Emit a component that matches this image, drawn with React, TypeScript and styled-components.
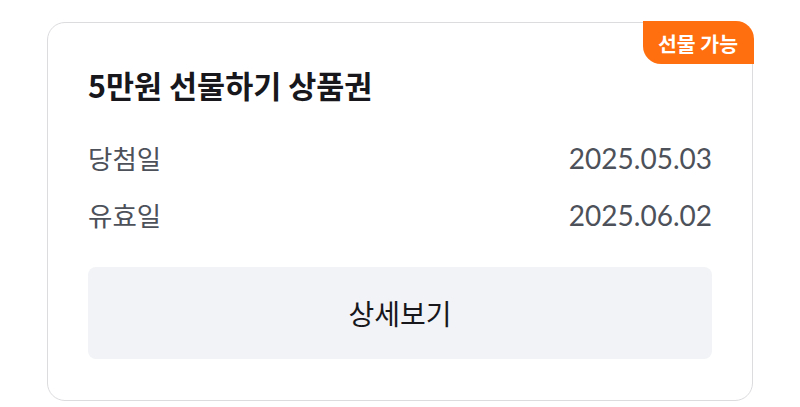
import styled, { createGlobalStyle } from "styled-components";

const GlobalStyle = createGlobalStyle`
  html, body {
    margin: 0;
    padding: 0;
    background: #fff;
  }
  body {
    font-family: "Noto Sans CJK KR", "Noto Sans", sans-serif;
  }
`;

const StyledPage = styled.div`
  width: 800px;
  height: 407px;
  padding: 22px 47px 0 47px;
  box-sizing: border-box;
`;

const StyledCard = styled.div`
  position: relative;
  box-sizing: border-box;
  width: 706px;
  height: 379px;
  border: 1px solid #dcdcdf;
  border-radius: 18px;
  padding: 40px 40px 0 40px;
  display: flex;
  flex-direction: column;
`;

const StyledBadge = styled.div`
  position: absolute;
  top: -2px;
  right: -2px;
  height: 43px;
  padding: 0 16px 0 15px;
  display: flex;
  align-items: center;
  background-color: #ff6f0f;
  color: #fff;
  font-size: 20.5px;
  font-weight: 700;
  border-radius: 0 18px 0 18px;
`;

const StyledTitle = styled.div`
  font-size: 30.5px;
  font-weight: 700;
  color: #17171c;
  line-height: 44px;
  margin-bottom: 22px;
`;

const StyledRow = styled.div`
  display: flex;
  justify-content: space-between;
  align-items: center;
  height: 57px;
  font-size: 26.5px;
  color: #4d5159;
`;

const StyledDate = styled.span`
  font-family: "Lato", "Noto Sans CJK KR", sans-serif;
  font-size: 28px;
  color: #4d5159;
`;

const StyledButton = styled.button`
  margin-top: 24px;
  height: 92px;
  border: none;
  border-radius: 8px;
  background-color: #f2f3f6;
  color: #17171c;
  font-family: "Noto Sans CJK KR", sans-serif;
  font-size: 28px;
  font-weight: 400;
  cursor: pointer;
`;

const rows = [
  { label: "당첨일", value: "2025.05.03" },
  { label: "유효일", value: "2025.06.02" },
];

const App = () => {
  return (
    <>
      <GlobalStyle />
      <StyledPage>
        <StyledCard>
          <StyledBadge>선물 가능</StyledBadge>
          <StyledTitle>5만원 선물하기 상품권</StyledTitle>
          {rows.map((row) => (
            <StyledRow key={row.label}>
              <span>{row.label}</span>
              <StyledDate>{row.value}</StyledDate>
            </StyledRow>
          ))}
          <StyledButton>상세보기</StyledButton>
        </StyledCard>
      </StyledPage>
    </>
  );
};

export default App;
